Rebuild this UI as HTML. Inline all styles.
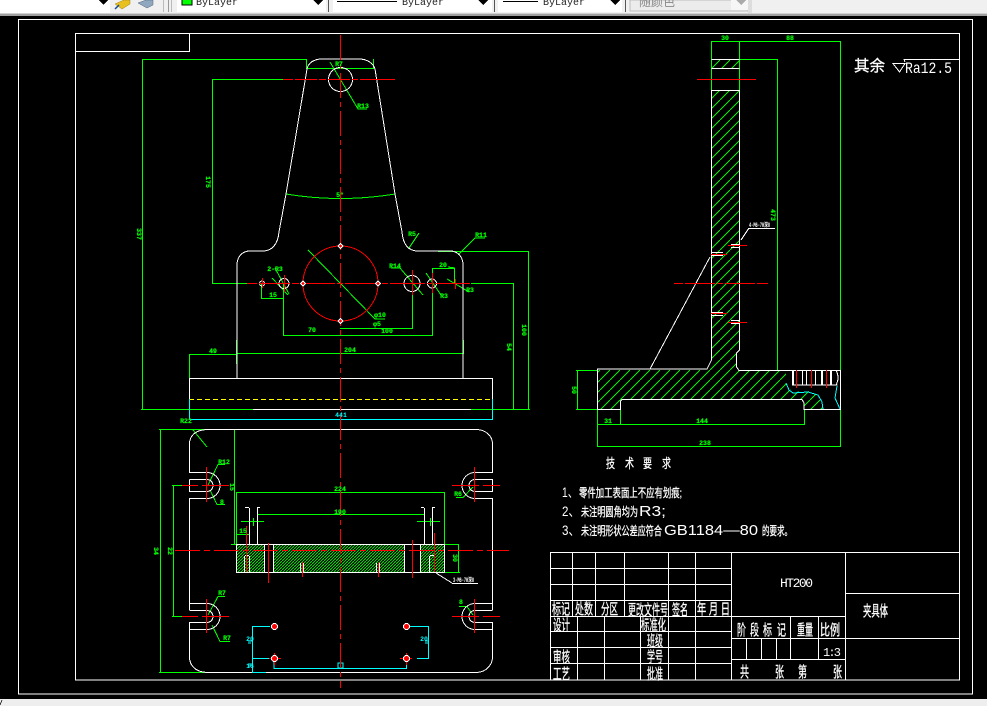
<!DOCTYPE html>
<html><head><meta charset="utf-8"><style>
html,body{margin:0;padding:0;background:#000;width:987px;height:706px;overflow:hidden}
svg{display:block}
.w{stroke:#fff;fill:none}.g{stroke:#0f0;fill:none}.r{stroke:#f00;fill:none}.c{stroke:#0ff;fill:none}
.lg{fill:#0f0;font:bold 6.500px "Liberation Mono",monospace;text-anchor:middle;stroke:#0f0;stroke-width:.2}
.lc{fill:#0ff;font:bold 6.500px "Liberation Mono",monospace;text-anchor:middle}
.lw{fill:#fff;font:bold 6px "Liberation Mono",monospace}
.t{fill:#fff;stroke:#fff;stroke-width:.3;font-family:"Liberation Sans","Noto Sans CJK SC",sans-serif}
.tb{fill:#222;font:10px "Liberation Mono",monospace}
</style></head><body>
<svg width="987" height="706" viewBox="0 0 987 706" xmlns="http://www.w3.org/2000/svg" shape-rendering="crispEdges">
<defs>
<pattern id="h" patternUnits="userSpaceOnUse" width="10" height="10"><path d="M0 10L10 0" stroke="#0e0" stroke-width="1" shape-rendering="crispEdges"/></pattern>
<pattern id="d" patternUnits="userSpaceOnUse" width="3" height="3"><rect width="3" height="3" fill="#000"/><path d="M-1 4L4 -1" stroke="#0d0" stroke-width="1.300" shape-rendering="crispEdges"/></pattern>
</defs>
<rect width="987" height="706" fill="#000"/>
<!-- toolbar -->
<rect width="987" height="14" fill="#f0f0f0"/>
<rect y="13" width="987" height="1" fill="#d0d0d0"/><rect y="14" width="987" height="2" fill="#a0a0a0"/>
<rect width="110" height="13" fill="#fff"/>
<path d="M99 0H108L103.500 5Z" fill="#000"/>
<g shape-rendering="auto">
<path d="M115 4L124 0H130V4L122 9Z" fill="#e8c020" stroke="#a08010" stroke-width=".5"/>
<path d="M115 9L119 5" stroke="#124a9c" stroke-width="1.500"/>
<path d="M138 3L146 0H153V5L147 8Z" fill="#8fa8c0" stroke="#506478" stroke-width=".5"/>
</g>
<rect x="163" y="0" width="1" height="12" fill="#bbb"/><rect x="168" y="0" width="1" height="12" fill="#999"/><rect x="171" y="0" width="1" height="12" fill="#bbb"/>
<rect x="177" width="149" height="12" fill="#fff"/><rect x="182" y="-1" width="10" height="6" fill="#0f0" stroke="#000"/>
<text class="tb" x="196" y="5">ByLayer</text><path d="M313 0H323L318 5Z" fill="#000"/>
<rect x="328" y="0" width="1" height="12" fill="#555"/>
<rect x="333" width="159" height="12" fill="#fff"/><path d="M337 1.500H397" stroke="#000"/>
<text class="tb" x="402" y="5">ByLayer</text><path d="M478 0H488L483 5Z" fill="#000"/>
<rect x="494" y="0" width="1" height="12" fill="#555"/>
<rect x="498" width="124" height="12" fill="#fff"/><path d="M503 1.500H538" stroke="#000"/>
<text class="tb" x="543" y="5">ByLayer</text><path d="M610 0H620L615 5Z" fill="#000"/>
<rect x="625" y="0" width="1" height="12" fill="#555"/>
<rect x="630" width="118" height="11" fill="#ececec" stroke="#bbb"/><rect x="731" width="17" height="10" fill="#f6f6f6"/>
<text x="639" y="6" font-size="12" fill="#888" font-family="'Liberation Sans','Noto Sans CJK SC',sans-serif">随颜色</text>
<path d="M736 0H746L741 5Z" fill="#aaa"/>
<rect x="748" width="4" height="13" fill="#ddd"/>
<!-- bottom strip -->
<rect y="699" width="987" height="7" fill="#eee"/>
<path d="M2 700L0 705" stroke="#333"/>
<rect x="18.500" y="19.500" width="954" height="674.500" class="w"/>
<rect x="75.500" y="33.500" width="884" height="646.500" class="w"/>
<path d="M75.500 51.500H189.500V33.500" class="w"/>

<!-- Hatch side view -->
<path d="M711.500 59.500H739.500V68.500H711.500Z" fill="url(#h)"/>
<path d="M711.500 90.500H739.500V350L736.500 353V367L739 370H786V383L792 392L808 391L818 395L823 409H804V403L802 399H622L620 401V409H597V370H707L711.500 360Z" fill="url(#h)"/>
<rect x="236.500" y="544.500" width="208" height="28" fill="url(#d)"/>
<rect x="264" y="545" width="9" height="27" fill="#000"/><rect x="404" y="545" width="16" height="27" fill="#000"/>

<!-- Green lines -->
<g class="g">
<path d="M142 59.500H306.500V68.500H373.500V59"/>
<path d="M142.500 59V409M141 409.500H253M471 409.500H530"/>
<path d="M212.500 79V283M212 79.500H283M212 283.500H247"/>
<path d="M471 283.500H513.500V409"/>
<path d="M438 251.500H529M528.500 251V409"/>
<path d="M261.500 283V298.500H283M283.500 283V335.500H432.500V283"/>
<path d="M340 328.500H412.500V283"/>
<path d="M432.500 283V268.500H454.500V283"/>
<path d="M237 353.500H463.500M189 354.500H237M189.500 354V378"/>
<path d="M236.500 340V364M463.500 340V354"/>
<path d="M711.500 41.500H840.500V447M711.500 41V90M739.500 41V90"/>
<path d="M739.500 59.500H777.500V370"/>
<path d="M576 370.500H597M576 409.500H597M577.500 370V409"/>
<path d="M597.500 409V447M620.500 409V425M804.500 409V425M597 424.500H804M597 446.500H840"/>
<path d="M159 429.500H207M159 672.500H207M160.500 429V672"/>
<path d="M172 485.500H182M172 616.500H182M173.500 485V616"/>
<path d="M234.500 429V544M231 544.500H237"/>
<path d="M236.500 492.500H444.500M236.500 492V544M444.500 492V572"/>
<path d="M257 514.500H424M257.500 514V544M424.500 514V522"/>
<path d="M241 521.500H264M417 521.500H440M253.500 518V526M430.500 518V526"/>
<path d="M236 534.500H249"/>
<path d="M444 544.500H459M458.500 544V572.500M444 572.500H460"/>
<path d="M286 194Q340 203 395 194"/>
<path d="M330 62L358 109H367"/>
<path d="M308 250L375 319H385"/>
<path d="M485 238H475L458 255"/>
<path d="M419 233L409 248"/>
<path d="M272 278L288 295M275 268L289 294"/>
<path d="M391 268H400L423 295M426 273L441 295"/>
<path d="M447 279L469 292"/>
<path d="M448 267L455 268"/>
<path d="M193 430L207 447"/>
<path d="M225 464.500H218L208 485M210 490L217 504.500H225"/>
<path d="M456 497.500H463L473 487"/>
<path d="M225 596.500H218L208 615M212 625L220 641.500H230"/>
<path d="M459 606.500H467L473 615"/>
</g>

<!-- White outlines -->
<g class="w" stroke-linejoin="round">
<path d="M237 378V265C237 257 242 251 250 251H263C272 251 278 244 279 232L286 194L307 69C308 63 314 59 322 59H359C367 59 373 63 375 69L395 194L402 232C403 244 408 251 418 251H450C458 251 463 257 463 265V378"/>
<circle cx="340.500" cy="79.500" r="12"/>
<circle cx="284" cy="283.500" r="5"/><circle cx="262" cy="283.500" r="2.500"/>
<circle cx="412" cy="283.500" r="8"/><circle cx="432" cy="283.500" r="4.500"/>
<path d="M189.500 399V378.500H492.500V399"/>
<path d="M253 409.500H471"/>
<path d="M711.500 59.500H739.500M711.500 68.500H739.500M711.500 90.500H739.500"/>
<path d="M792.500 370V385M802.500 370V385M806.500 370V385M815.500 370V385M821.500 370V385M831.500 370V385M837.500 385H792"/>
<path d="M793.500 370V385M822.500 370V385M830.500 370V385"/>
<path d="M207 429.500H477M205 672.500H477"/>
<path d="M189.500 444V472.500H207M189.500 479.500H207V479M189.500 479.500V491.500H207M189.500 498.500H207M189.500 491.500V491M189.500 498V603.500H207M189.500 610.500H207M189.500 622.500H207M189.500 629.500H207M189.500 603V610M189.500 622V657"/>
<path d="M492.500 444V472.500H475M492.500 479.500H475M492.500 479V491.500H475M492.500 498.500H475V498M492.500 498V603.500H475M492.500 610.500H475M492.500 610V603M492.500 622.500H475M492.500 629.500H475M492.500 622V657"/>
<path d="M236.500 544.500H444.500V572.500H236.500Z"/>
<path d="M264.500 545V572M273.500 545V572M404.500 545V572M420.500 545V572"/>
<path d="M249.500 508V544M257.500 508V544M424.500 508V544M432.500 508V544"/>
<path d="M245 507.500H249M257 507.500H260M421 507.500H424M432 507.500H435"/>
<path d="M244.500 556V572M249.500 556V572M245 555.500H249M429.500 556V572M434.500 556V572M430 555.500H434"/>
<path d="M300.500 563V572M303.500 563V572M376.500 563V572M379.500 563V572"/>
<path d="M711 252.500H723M711 255.500H723M731 244.500H739M731 247.500H739"/>
<path d="M711 312.500H723M711 315.500H723M731 320.500H739M731 323.500H739"/>
<path d="M452 583.500H478M749 228.500H775"/>
<path d="M711.500 90V360L707 369H597.500V409.500H620.500V401L622 399.500H802L804 403V409.500H840.500V370.500H739L736.500 367V353L739.500 350V90"/>
<path d="M650 369L710 257"/>
<path d="M741 240L749 228"/>
<path d="M436 573L452 583"/>
<path d="M189.500 444C189.500 436 195 430 207 429.500M477 429.500C486 430 492.500 436 492.500 444"/>
<path d="M189.500 657C189.500 665 195 672 207 672.500M477 672.500C486 672 492.500 665 492.500 657"/>
<path d="M207 472.500A13 13 0 0 1 207 498.500M207 479.500A6 6 0 0 1 207 491.500"/>
<path d="M475 472.500A13 13 0 0 0 475 498.500M475 479.500A6 6 0 0 0 475 491.500"/>
<path d="M207 603.500A13 13 0 0 1 207 629.500M207 610.500A6 6 0 0 1 207 622.500"/>
<path d="M475 603.500A13 13 0 0 0 475 629.500M475 610.500A6 6 0 0 0 475 622.500"/>
<path d="M836 370Q840 378 836 385"/>
</g>

<!-- Yellow + cyan -->
<path d="M189 399.500H492" stroke="#ff0" stroke-dasharray="5 3"/>
<g class="c">
<path d="M189.500 399V419.500H492.500V399"/>
<path d="M252 626.500H270M252.500 626V672M252 658.500H270M252 672.500H266"/>
<path d="M410 626.500H428M428.500 626V659M417 658.500H428"/>
<path d="M274 658V668.500H406.500V658"/>
<rect x="338" y="663" width="5" height="5"/>
<path d="M248 641H252M248 643H251M248 664H252M248 666H251M425 641H428M425 643H428"/>
<path d="M786 383L789 390L793 393L808 392L818 395L822 402L823 409M837 386L835 398L840 409"/>
</g>

<!-- Red -->
<g fill="#f00">
<rect x="283" y="79" width="10" height="1"/><rect x="295" y="79" width="22" height="1"/><rect x="319" y="79" width="7" height="1"/><rect x="328" y="79" width="22" height="1"/><rect x="352" y="79" width="6" height="1"/><rect x="360" y="79" width="35" height="1"/>
<rect x="247" y="283" width="10" height="1"/><rect x="259" y="283" width="31" height="1"/><rect x="292" y="283" width="7" height="1"/><rect x="301" y="283" width="34" height="1"/><rect x="337" y="283" width="6" height="1"/><rect x="345" y="283" width="35" height="1"/><rect x="382" y="283" width="6" height="1"/><rect x="390" y="283" width="35" height="1"/><rect x="427" y="283" width="6" height="1"/><rect x="435" y="283" width="35" height="1"/>
<rect x="697" y="79" width="59" height="1"/>
<rect x="674" y="283" width="9" height="1"/><rect x="685" y="283" width="30" height="1"/><rect x="717" y="283" width="6" height="1"/><rect x="725" y="283" width="30" height="1"/><rect x="757" y="283" width="11" height="1"/>
</g>
<g class="r">
<path d="M340.500 35V688" stroke-dasharray="25 4 5 4"/>
<path d="M711 254.500H727M728 245.500H747M711 313.500H727M728 322.500H747"/>
<path d="M796.500 370V388M811.500 370V388M826.500 370V388"/>
<path d="M175 550.500H509" stroke-dasharray="25 4 6 4"/>
<path d="M206.500 467V502M182 485.500H198M202 485.500H229M474.500 467V502M452 485.500H479M483 485.500H500"/>
<path d="M206.500 599V633M182 616.500H198M202 616.500H229M474.500 599V633M452 616.500H479M483 616.500H500"/>
<path d="M246.500 526V572M268.500 543V583M412.500 540V578M434.500 533V572M302.500 562V577M378.500 562V577"/>
<path d="M262.500 278V288M284.500 275V292M412.500 270V295M432.500 273V293M455.500 279V289"/>
<path d="M269 658.500H281M274.500 653V665M400 658.500H412M406.500 653V665"/>
</g>
<circle cx="340.500" cy="283.500" r="37.500" class="r"/>
<g fill="#f00" stroke="#fff">
<circle cx="274.500" cy="626.500" r="3"/><circle cx="274.500" cy="658.500" r="3"/><circle cx="406.500" cy="626.500" r="3"/><circle cx="406.500" cy="658.500" r="3"/>
<path d="M340.500 243.500l2.500 2.500-2.500 2.500-2.500-2.500Z"/><path d="M340.500 318.500l2.500 2.500-2.500 2.500-2.500-2.500Z"/>
<path d="M303 281l2.500 2.500-2.500 2.500-2.500-2.500Z"/><path d="M378 281l2.500 2.500-2.500 2.500-2.500-2.500Z"/>
</g>

<!-- green labels -->
<text class="lg" x="339" y="66">R7</text>
<text class="lg" x="363" y="108">R13</text>
<text class="lg" x="340" y="197">5°</text>
<text class="lg" transform="translate(206,182) rotate(90)">175</text>
<text class="lg" transform="translate(137,234) rotate(90)">337</text>
<text class="lg" x="412" y="236">R5</text>
<text class="lg" x="481" y="237">R11</text>
<text class="lg" x="275" y="271">2-R3</text>
<text class="lg" x="395" y="268">R14</text>
<text class="lg" x="444" y="298">R3</text>
<text class="lg" x="470" y="292">R3</text>
<text class="lg" x="273" y="297">15</text>
<text class="lg" x="312" y="332">70</text>
<text class="lg" x="377" y="326">φ5</text>
<text class="lg" x="387" y="333">100</text>
<text class="lg" x="380" y="317">φ10</text>
<text class="lg" x="443" y="267">20</text>
<text class="lg" x="213" y="353">49</text>
<text class="lg" x="350" y="352">204</text>
<text class="lc" x="341" y="417">441</text>
<text class="lg" transform="translate(507,347) rotate(90)">54</text>
<text class="lg" transform="translate(522,330) rotate(90)">100</text>
<text class="lg" x="186" y="423">R22</text>
<text class="lg" x="224" y="464">R12</text>
<text class="lg" x="222" y="504">8</text>
<text class="lg" x="458" y="496">R6</text>
<text class="lg" x="222" y="595">R7</text>
<text class="lg" x="227" y="640">R7</text>
<text class="lg" x="461" y="604">8</text>
<text class="lg" transform="translate(230,487) rotate(90)">15</text>
<text class="lg" transform="translate(154,551) rotate(90)">34</text>
<text class="lg" transform="translate(168,551) rotate(90)">22</text>
<text class="lg" x="340" y="491">224</text>
<text class="lg" x="340" y="514">190</text>
<text class="lg" x="243" y="533">15</text>
<text class="lg" transform="translate(453,558) rotate(90)">30</text>
<text class="lg" x="725" y="40">30</text>
<text class="lg" x="790" y="40">88</text>
<text class="lg" transform="translate(771,215) rotate(90)">473</text>
<text class="lg" transform="translate(572,390) rotate(90)">50</text>
<text class="lg" x="608" y="423">31</text>
<text class="lg" x="702" y="423">144</text>
<text class="lg" x="705" y="445">238</text>
<text class="lw" x="749" y="227" textLength="21" lengthAdjust="spacingAndGlyphs">4-M6-7H深8</text>
<text class="lw" x="453" y="582" textLength="21" lengthAdjust="spacingAndGlyphs">3-M6-7H深8</text>
<text class="lc" x="250" y="641">20</text>
<text class="lc" x="250" y="668">16</text>
<text class="lc" x="424" y="641">20</text>

<!-- Ra -->
<text class="t" x="854" y="71" font-size="15.500" stroke-width="0">其余</text>
<path d="M893 63.500H905L899.500 72ZM905 62L904 59.500H959.500" fill="none" stroke="#fff"/>
<text x="905" y="73" fill="#fff" font-family="'Liberation Mono',monospace" font-size="16" textLength="47" lengthAdjust="spacingAndGlyphs">Ra12.5</text>

<!-- Notes -->
<g class="t" font-size="12">
<text x="606" y="468" font-size="13" textLength="9" lengthAdjust="spacingAndGlyphs">技</text>
<text x="625" y="468" font-size="13" textLength="9" lengthAdjust="spacingAndGlyphs">术</text>
<text x="643" y="468" font-size="13" textLength="9" lengthAdjust="spacingAndGlyphs">要</text>
<text x="662" y="468" font-size="13" textLength="9" lengthAdjust="spacingAndGlyphs">求</text>
<text x="562" y="497" font-size="14" stroke-width="0" textLength="16" lengthAdjust="spacingAndGlyphs">1、</text>
<text x="579" y="497" textLength="103" lengthAdjust="spacingAndGlyphs">零件加工表面上不应有划痕;</text>
<text x="562" y="516" font-size="14" stroke-width="0" textLength="18" lengthAdjust="spacingAndGlyphs">2、</text>
<text x="581" y="516" textLength="57" lengthAdjust="spacingAndGlyphs">未注明圆角均为</text>
<text x="639" y="516" font-size="15" stroke-width="0" textLength="27" lengthAdjust="spacingAndGlyphs">R3;</text>
<text x="562" y="535" font-size="14" stroke-width="0" textLength="18" lengthAdjust="spacingAndGlyphs">3、</text>
<text x="581" y="535" textLength="81" lengthAdjust="spacingAndGlyphs">未注明形状公差应符合</text>
<text x="664" y="535" font-size="15" stroke-width="0" textLength="94" lengthAdjust="spacingAndGlyphs">GB1184—80</text>
<text x="762" y="535" textLength="30" lengthAdjust="spacingAndGlyphs">的要求。</text>
</g>

<!-- Title block -->
<g class="w">
<path d="M550.500 680V552.500H959.500"/>
<path d="M550 568.500H731M550 584.500H731M550 600.500H731M550 616.500H731M550 631.500H731M550 647.500H731M550 663.500H731"/>
<path d="M572.500 552V616M595.500 552V616M624.500 552V616M668.500 552V680M695.500 552V680M731.500 552V680M845.500 552V680"/>
<path d="M577.500 616V680M604.500 616V680M640.500 616V680"/>
<path d="M731 616.500H845M731 638.500H845M731 659.500H845"/>
<path d="M790.500 616V659M818.500 616V659M746.500 638V659M761.500 638V659M776.500 638V659"/>
<path d="M845 593.500H959M845 638.500H959"/>
</g>
<g class="t" font-size="15">
<text x="552" y="614" textLength="18" lengthAdjust="spacingAndGlyphs">标记</text>
<text x="575" y="614" textLength="18" lengthAdjust="spacingAndGlyphs">处数</text>
<text x="601" y="614" textLength="17" lengthAdjust="spacingAndGlyphs">分区</text>
<text x="628" y="615" textLength="40" lengthAdjust="spacingAndGlyphs">更改文件号</text>
<text x="672" y="615" textLength="16" lengthAdjust="spacingAndGlyphs">签名</text>
<text x="697" y="614" textLength="33" lengthAdjust="spacingAndGlyphs" xml:space="preserve">年 月 日</text>
<text x="553" y="630" textLength="17" lengthAdjust="spacingAndGlyphs">设计</text>
<text x="641" y="630" textLength="25" lengthAdjust="spacingAndGlyphs">标准化</text>
<text x="647" y="646" textLength="16" lengthAdjust="spacingAndGlyphs">班级</text>
<text x="553" y="662" textLength="17" lengthAdjust="spacingAndGlyphs">审核</text>
<text x="647" y="662" textLength="16" lengthAdjust="spacingAndGlyphs">学号</text>
<text x="553" y="679" textLength="17" lengthAdjust="spacingAndGlyphs">工艺</text>
<text x="647" y="679" textLength="16" lengthAdjust="spacingAndGlyphs">批准</text>
<text x="737" y="635" textLength="9" lengthAdjust="spacingAndGlyphs">阶</text>
<text x="750" y="635" textLength="9" lengthAdjust="spacingAndGlyphs">段</text>
<text x="763" y="635" textLength="9" lengthAdjust="spacingAndGlyphs">标</text>
<text x="777" y="635" textLength="9" lengthAdjust="spacingAndGlyphs">记</text>
<text x="797" y="635" textLength="16" lengthAdjust="spacingAndGlyphs">重量</text>
<text x="820" y="635" textLength="20" lengthAdjust="spacingAndGlyphs">比例</text>
<text x="740" y="677" textLength="9" lengthAdjust="spacingAndGlyphs">共</text>
<text x="775" y="677" textLength="9" lengthAdjust="spacingAndGlyphs">张</text>
<text x="798" y="677" textLength="9" lengthAdjust="spacingAndGlyphs">第</text>
<text x="833" y="677" textLength="9" lengthAdjust="spacingAndGlyphs">张</text>
<text x="863" y="616" textLength="25" lengthAdjust="spacingAndGlyphs">夹具体</text>
</g>
<text x="780" y="587" fill="#fff" font-family="'Liberation Mono',monospace" font-size="13" textLength="33" lengthAdjust="spacing">HT200</text>
<text x="823" y="656" fill="#fff" font-family="'Liberation Mono',monospace" font-size="12" textLength="18" lengthAdjust="spacing">1:3</text>
</svg>
</body></html>
